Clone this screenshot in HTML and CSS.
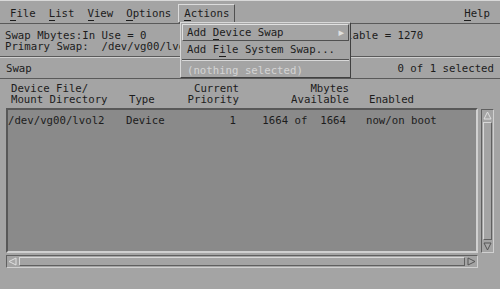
FILE: index.html
```html
<!DOCTYPE html>
<html lang="en">
<head>
  <meta charset="UTF-8" />
  <title>Swap</title>
  <link rel="stylesheet" href="styles.css">
</head>
<body>

<div class="menubar">
  <span class="menu-item"><u>F</u>ile</span>
  <span class="menu-item"><u>L</u>ist</span>
  <span class="menu-item"><u>V</u>iew</span>
  <span class="menu-item"><u>O</u>ptions</span>
  <span class="menu-item active"><u>A</u>ctions</span>
  <span class="menu-item help"><u>H</u>elp</span>
</div>

<div class="info">
  <div class="line">Swap Mbytes:In Use = 0                           Available = 1270</div>
  <div class="line">Primary Swap:  /dev/vg00/lvol2</div>
</div>

<div class="titlebar">
  <span>Swap</span>
  <span>0 of 1 selected</span>
</div>

<div class="cols header">
  <span>Device File/<br>Mount Directory</span>
  <span class="bottom">Type</span>
  <span class="right">Current<br>Priority</span>
  <span class="right">Mbytes<br>Available</span>
  <span class="bottom">Enabled</span>
</div>

<div class="listarea">
  <div class="list">
    <div class="cols row">
      <span>/dev/vg00/lvol2</span>
      <span>Device</span>
      <span class="right">1</span>
      <span class="right keep">1664 of  1664</span>
      <span>now/on boot</span>
    </div>
  </div>
  <div class="vscroll">
    <div class="arrow"><svg width="9" height="9" viewBox="0 0 9 9"><polygon points="4.5,1 8,8 1,8" fill="#a8a8a8" stroke="#e0e0e0" stroke-width="1"/></svg></div>
    <div class="trough"></div>
    <div class="arrow"><svg width="9" height="9" viewBox="0 0 9 9"><polygon points="1,1 8,1 4.5,8" fill="#a8a8a8" stroke="#555" stroke-width="1"/></svg></div>
  </div>
</div>

<div class="hscroll">
  <div class="arrow"><svg width="9" height="9" viewBox="0 0 9 9"><polygon points="1,4.5 8,1 8,8" fill="#a8a8a8" stroke="#e0e0e0" stroke-width="1"/></svg></div>
  <div class="trough"></div>
  <div class="arrow"><svg width="9" height="9" viewBox="0 0 9 9"><polygon points="1,1 8,4.5 1,8" fill="#a8a8a8" stroke="#555" stroke-width="1"/></svg></div>
</div>

<div class="dropdown">
  <div class="dd-item hot"><span>Add <u>D</u>evice Swap</span><span class="sub">&#9656;</span></div>
  <div class="dd-item"><span>Add F<u>i</u>le System Swap...</span></div>
  <div class="dd-sep"></div>
  <div class="dd-item off"><span>(nothing selected)</span></div>
</div>

</body>
</html>
```

FILE: styles.css
```css
body {
  margin: 0;
  width: 500px;
  height: 289px;
  overflow: hidden;
  background-color: #a4a4a4;
  color: #1c1c1c;
  font-family: "DejaVu Sans Mono", "Liberation Mono", monospace;
  font-size: 10.7px;
  line-height: 11px;
  position: relative;
}
u {
  text-decoration: none;
  border-bottom: 1px solid #1c1c1c;
}
.menubar {
  display: flex;
  align-items: flex-start;
  height: 24px;
  padding: 0 4px;
  border-top: 1px solid #d8d8d8;
  border-bottom: 1px solid #5a5a5a;
  box-sizing: border-box;
}
.menu-item {
  padding: 3px 5px 3px;
  margin-top: 3px;
  margin-right: 1px;
  border: 1px solid transparent;
}
.menu-item.active {
  border-color: #dcdcdc #505050 #505050 #dcdcdc;
}
.menu-item.help { margin-left: auto; margin-right: 0; }
.info {
  height: 33px;
  padding: 6px 5px 0;
  box-sizing: border-box;
  border-bottom: 1px solid #5a5a5a;
}
.line { white-space: pre; }
.titlebar {
  display: flex;
  justify-content: space-between;
  align-items: center;
  height: 22px;
  padding: 0 6px;
  box-sizing: border-box;
  border-top: 1px solid #d0d0d0;
  border-bottom: 1px solid #5a5a5a;
}
.cols {
  display: grid;
  grid-template-columns: 118px 45px 65px 110px 130px;
}
.cols > span:nth-child(5) { padding-left: 20px; }
.right { text-align: right; }
.keep { white-space: pre; }
.header {
  padding: 4px 0 3px 11px;
}
.bottom { align-self: end; }
.listarea {
  display: flex;
  gap: 3px;
  padding-left: 6px;
}
.list {
  width: 472px;
  height: 145px;
  box-sizing: border-box;
  background-color: #8a8a8a;
  border: 2px solid;
  border-color: #585858 #d0d0d0 #d0d0d0 #585858;
  padding: 5px 0 0 0;
}
.vscroll {
  width: 13px;
  height: 144px;
  margin-top: 1px;
  display: flex;
  flex-direction: column;
  box-sizing: border-box;
  border: 1px solid;
  border-color: #606060 #d0d0d0 #d0d0d0 #606060;
}
.vscroll .trough {
  flex: 1;
  margin: 1px;
  border: 1px solid;
  border-color: #d8d8d8 #606060 #606060 #d8d8d8;
}
.arrow {
  width: 11px;
  height: 11px;
  display: flex;
  align-items: center;
  justify-content: center;
}
.hscroll {
  display: flex;
  width: 472px;
  height: 13px;
  margin: 2px 0 0 6px;
  box-sizing: border-box;
  border: 1px solid;
  border-color: #606060 #d0d0d0 #d0d0d0 #606060;
}
.hscroll .trough {
  flex: 1;
  margin: 1px;
  border: 1px solid;
  border-color: #d8d8d8 #606060 #606060 #d8d8d8;
}
.dropdown {
  position: absolute;
  left: 180px;
  top: 22px;
  width: 171px;
  height: 56px;
  box-sizing: border-box;
  background-color: #a4a4a4;
  border: 1px solid;
  border-color: #d8d8d8 #404040 #404040 #d8d8d8;
  padding: 1px;
}
.dd-item {
  display: flex;
  align-items: center;
  height: 17px;
  padding: 0 4px;
  border: 1px solid transparent;
  box-sizing: border-box;
  white-space: pre;
}
.dd-item.hot {
  border-color: #e0e0e0 #505050 #505050 #e0e0e0;
}
.sub {
  margin-left: auto;
  color: #e0e0e0;
  font-family: "DejaVu Sans", sans-serif;
  font-size: 11px;
}
.dd-sep {
  height: 0;
  margin: 1px 0;
  border-top: 1px solid #505050;
  border-bottom: 1px solid #d8d8d8;
}
.dd-item.off {
  color: #d4d4d4;
}
```
